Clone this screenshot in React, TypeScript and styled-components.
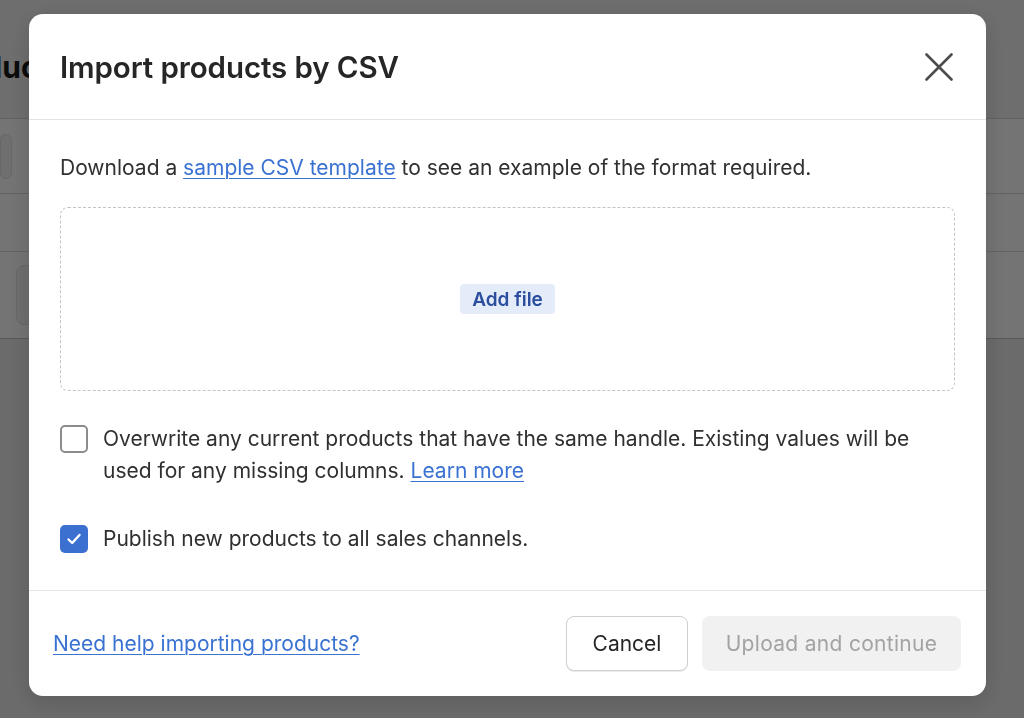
import React from "react";
import styled, { createGlobalStyle } from "styled-components";

const Global = createGlobalStyle`
  html, body { margin: 0; padding: 0; }
  body {
    font-family: Inter, "Liberation Sans", Arial, sans-serif;
    background: #ebebeb;
    width: 1024px;
    height: 718px;
    overflow: hidden;
  }
  * { box-sizing: border-box; }
`;

/* ---------- background page (dimmed) ---------- */
const Page = styled.div`
  width: 1024px;
  height: 718px;
  background: #ebebeb;
  display: flex;
  flex-direction: column;
  overflow: hidden;
`;

const PageHeader = styled.div`
  height: 118px;
  background: #f1f1f1;
  display: flex;
  align-items: center;
  padding-top: 16px;
`;

const PageTitle = styled.h1`
  margin: 0 0 0 -66px;
  font-size: 30px;
  font-weight: 700;
  color: #1a1a1a;
`;

const PageCard = styled.div`
  background: #ffffff;
  border-top: 1px solid #d4d4d4;
  border-bottom: 1px solid #c4c4c4;
  display: flex;
  flex-direction: column;
`;

const CardRow = styled.div<{ $h: number; $pad: number }>`
  height: ${(p) => p.$h}px;
  display: flex;
  align-items: center;
  padding-left: ${(p) => p.$pad}px;
  border-bottom: 1px solid #d8d8d8;
  &:last-child { border-bottom: none; }
`;

const GhostBox = styled.div<{ $w: number; $h: number }>`
  width: ${(p) => p.$w}px;
  height: ${(p) => p.$h}px;
  border-radius: 8px;
  background: #f3f3f3;
  border: 1px solid #e2e2e2;
`;

/* ---------- overlay & modal ---------- */
const Overlay = styled.div`
  position: fixed;
  inset: 0;
  background: rgba(0, 0, 0, 0.545);
  display: flex;
  align-items: flex-start;
  justify-content: flex-start;
  padding: 14px 0 0 29px;
`;

const Modal = styled.div`
  width: 957px;
  height: 682px;
  background: #ffffff;
  border-radius: 14px;
  display: flex;
  flex-direction: column;
  overflow: hidden;
  box-shadow: 0 6px 24px rgba(0, 0, 0, 0.15);
`;

const Header = styled.div`
  height: 106px;
  flex: none;
  display: flex;
  align-items: center;
  justify-content: space-between;
  padding: 0 33px 0 31px;
  border-bottom: 1px solid #e3e3e3;
`;

const Title = styled.h2`
  margin: 0;
  font-size: 29.5px;
  font-weight: 600;
  color: #262626;
  letter-spacing: -0.1px;
`;

const CloseButton = styled.button`
  border: none;
  background: none;
  padding: 0;
  width: 28px;
  height: 28px;
  display: flex;
  align-items: center;
  justify-content: center;
  cursor: pointer;
`;

const Body = styled.div`
  flex: 1;
  padding: 32px 31px 0 31px;
  display: flex;
  flex-direction: column;
`;

const Text = styled.p`
  margin: 0;
  font-size: 21px;
  line-height: 32px;
  color: #303030;
`;

const Link = styled.a`
  color: #3a72d2;
  text-decoration: underline;
  text-underline-offset: 3px;
  text-decoration-thickness: 1px;
  cursor: pointer;
`;

const DropZone = styled.div`
  margin-top: 23px;
  height: 184px;
  border: 1.5px dashed #c4c4c4;
  border-radius: 8px;
  display: flex;
  align-items: center;
  justify-content: center;
`;

const AddFile = styled.button`
  border: none;
  background: #e4ecfa;
  color: #2b4f9e;
  font-family: inherit;
  font-size: 19px;
  font-weight: 600;
  height: 30px;
  padding: 0 12px;
  border-radius: 4px;
  cursor: pointer;
`;

const OptionRow = styled.label<{ $mt: number }>`
  margin-top: ${(p) => p.$mt}px;
  display: flex;
  align-items: flex-start;
  gap: 15px;
  cursor: pointer;
`;

const Box = styled.span<{ $checked?: boolean }>`
  flex: none;
  width: 28px;
  height: 28px;
  margin-top: 2px;
  border-radius: 5px;
  border: ${(p) => (p.$checked ? "none" : "2px solid #8c8c8c")};
  background: ${(p) => (p.$checked ? "#3b6fd0" : "#ffffff")};
  display: flex;
  align-items: center;
  justify-content: center;
`;

const Footer = styled.div`
  height: 106px;
  flex: none;
  border-top: 1px solid #e3e3e3;
  display: flex;
  align-items: center;
  justify-content: space-between;
  padding: 0 25px 0 24px;
`;

const Actions = styled.div`
  display: flex;
  gap: 14px;
`;

const Button = styled.button<{ $variant: "secondary" | "disabled" }>`
  height: 55px;
  font-family: inherit;
  font-size: 21px;
  border-radius: 8px;
  padding: 0 20px;
  cursor: ${(p) => (p.$variant === "disabled" ? "default" : "pointer")};
  border: ${(p) => (p.$variant === "disabled" ? "none" : "1px solid #cfcfcf")};
  background: ${(p) => (p.$variant === "disabled" ? "#f1f1f1" : "#ffffff")};
  color: ${(p) => (p.$variant === "disabled" ? "#a3a3a3" : "#262626")};
  box-shadow: ${(p) =>
    p.$variant === "disabled" ? "none" : "0 1px 0 rgba(0,0,0,0.08)"};
`;

const CancelButton = styled(Button)`
  width: 122px;
`;

const UploadButton = styled(Button)`
  width: 259px;
  letter-spacing: 0.3px;
`;

const CloseIcon = () => (
  <svg width="28" height="28" viewBox="0 0 28 28" fill="none">
    <path
      d="M1.5 1.5 L26.5 26.5 M26.5 1.5 L1.5 26.5"
      stroke="#4d4d4d"
      strokeWidth="2.6"
      strokeLinecap="round"
    />
  </svg>
);

const CheckIcon = () => (
  <svg width="18" height="18" viewBox="0 0 18 18" fill="none">
    <path
      d="M3.5 9.5 L7.2 13 L14.5 5"
      stroke="#ffffff"
      strokeWidth="2.4"
      strokeLinecap="round"
      strokeLinejoin="round"
    />
  </svg>
);

export default function App() {
  return (
    <>
      <Global />
      <Page>
        <PageHeader>
          <PageTitle>Products</PageTitle>
        </PageHeader>
        <PageCard>
          <CardRow $h={75} $pad={0}>
            <GhostBox $w={12} $h={45} />
          </CardRow>
          <CardRow $h={58} $pad={0} />
          <CardRow $h={86} $pad={16}>
            <GhostBox $w={40} $h={60} />
          </CardRow>
        </PageCard>
      </Page>
      <Overlay>
        <Modal role="dialog" aria-label="Import products by CSV">
          <Header>
            <Title>Import products by CSV</Title>
            <CloseButton aria-label="Close">
              <CloseIcon />
            </CloseButton>
          </Header>
          <Body>
            <Text>
              Download a <Link>sample CSV template</Link> to see an example of
              the format required.
            </Text>
            <DropZone>
              <AddFile>Add file</AddFile>
            </DropZone>
            <OptionRow $mt={32}>
              <Box />
              <Text>
                Overwrite any current products that have the same handle.
                Existing values will be used for any missing columns.{" "}
                <Link>Learn more</Link>
              </Text>
            </OptionRow>
            <OptionRow $mt={36}>
              <Box $checked>
                <CheckIcon />
              </Box>
              <Text>Publish new products to all sales channels.</Text>
            </OptionRow>
          </Body>
          <Footer>
            <Text>
              <Link>Need help importing products?</Link>
            </Text>
            <Actions>
              <CancelButton $variant="secondary">Cancel</CancelButton>
              <UploadButton $variant="disabled" disabled>
                Upload and continue
              </UploadButton>
            </Actions>
          </Footer>
        </Modal>
      </Overlay>
    </>
  );
}
